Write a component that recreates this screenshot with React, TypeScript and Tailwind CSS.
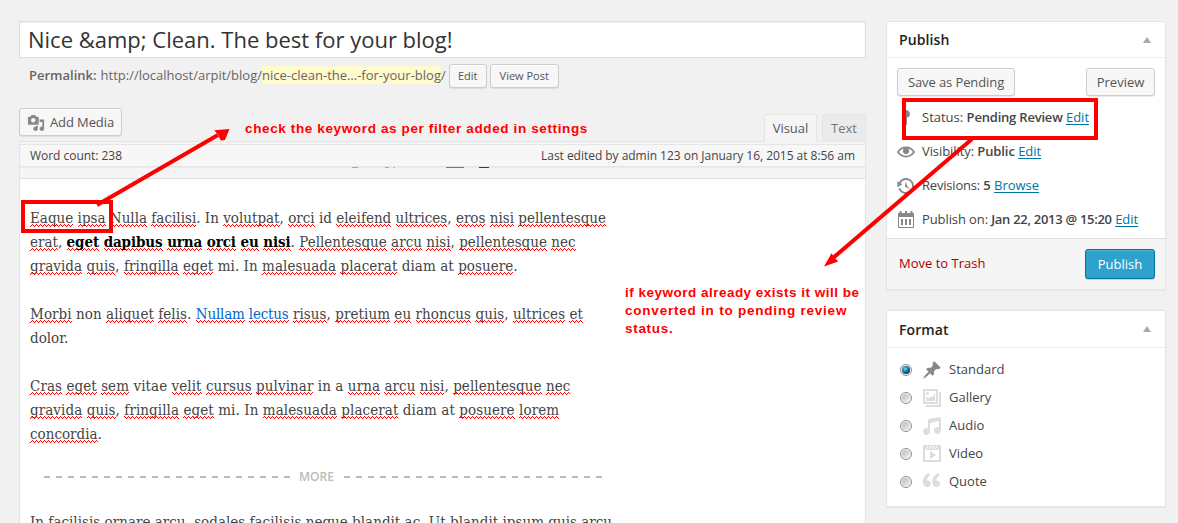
import type { ReactNode } from "react";
import clsx from "clsx";

const KNOWN_WORDS = new Set(["In", "id", "mi", "diam", "at", "non", "dolor", "vitae", "in", "a", "Ut"]);

// The wave is tiled on the 24px line grid and fixed to the viewport, so it stays on whole pixels in every word.
const SQUIGGLE =
  "bg-[url('data:image/svg+xml,%3Csvg%20xmlns=%22http://www.w3.org/2000/svg%22%20width=%224%22%20height=%2224%22%3E%3Cpath%20d=%22M0%208h1v1h-1zM1%209h1v1h-1zM2%2010h1v1h-1zM3%209h1v1h-1z%22%20fill=%22red%22/%3E%3C/svg%3E')] [background-size:4px_24px] bg-fixed bg-repeat";

/** Splits a run of text into words and underlines those that the spell checker does not know. */
function Spell({ children }: { children: string }) {
  return (
    <>
      {children.split(/([A-Za-z]+)/).map((part, i) =>
        /^[A-Za-z]+$/.test(part) && !KNOWN_WORDS.has(part) ? (
          <span key={i} className={SQUIGGLE}>
            {part}
          </span>
        ) : (
          part
        ),
      )}
    </>
  );
}

function Icon({ d, className, viewBox = "0 0 20 20" }: { d: string; className?: string; viewBox?: string }) {
  return (
    <svg viewBox={viewBox} className={clsx("shrink-0", className)} fill="currentColor" fillRule="evenodd">
      <path d={d} />
    </svg>
  );
}

const MEDIA =
  "M13 11V4c0-.55-.45-1-1-1h-1.67L9 1H5L3.67 3H2c-.55 0-1 .45-1 1v7c0 .55.45 1 1 1h10c.55 0 1-.45 1-1zM7 4.5c1.38 0 2.5 1.12 2.5 2.5S8.38 9.5 7 9.5 4.5 8.38 4.5 7 5.62 4.5 7 4.5zM14 6h5v10.5c0 1.38-1.12 2.5-2.5 2.5S14 17.88 14 16.5s1.12-2.5 2.5-2.5c.17 0 .34.02.5.05V9h-3V6zm-4 8.05V13h2v3.5c0 1.38-1.12 2.5-2.5 2.5S7 17.88 7 16.5 8.12 14 9.5 14c.17 0 .34.02.5.05z";
const STATUS = "M14 6c0 1.86-1.28 3.41-3 3.86V16c0 1-2 2-2 2V9.86C7.28 9.41 6 7.86 6 6c0-2.21 1.79-4 4-4s4 1.79 4 4z";
const EYE =
  "M19.7 9.4C17.7 6 14 3.9 10 3.9S2.3 6 .3 9.4L0 10l.3.6c2 3.4 5.7 5.5 9.7 5.5s7.7-2.1 9.7-5.5l.3-.6-.3-.6zM10 14.1c-3.1 0-6-1.6-7.7-4.1C3.6 8 5.7 6.6 8 6.1c-.9.6-1.5 1.7-1.5 2.9 0 1.9 1.6 3.5 3.5 3.5s3.5-1.6 3.5-3.5c0-1.2-.6-2.3-1.5-2.9 2.3.5 4.4 1.9 5.7 3.9-1.7 2.5-4.6 4.1-7.7 4.1z";
const HISTORY =
  "M13.65 2.88c3.93 2.01 5.48 6.84 3.47 10.77s-6.83 5.48-10.77 3.47c-1.87-.96-3.2-2.56-3.86-4.4l1.64-1.03c.45 1.57 1.52 2.95 3.08 3.76 3.01 1.54 6.69.35 8.23-2.66 1.55-3.01.36-6.69-2.65-8.24C9.78 3.01 6.1 4.2 4.56 7.21l1.88.97-4.95 3.08-.39-5.82 1.78.91C4.9 2.4 9.75.89 13.65 2.88zm-4.36 7.83C9.11 10.53 9 10.28 9 10c0-.07.03-.12.04-.19h-.01L10 5l.97 4.81L14 13l-4.5-2.12.02-.02c-.08-.04-.16-.09-.23-.15z";
const CALENDAR =
  "M2 3h1.500V1h2v2h3.500V1h2v2h3.500V1h2v2H18v15H2zM3 7v10h14V7zM5 9h2v6H5zM9 9h2v6H9zM13 9h2v6h-2z";
const PIN =
  "M10.44 3.02l1.82-1.82 6.36 6.35-1.83 1.82c-1.05-.68-2.48-.57-3.41.36l-.75.75c-.92.93-1.04 2.35-.35 3.41l-1.83 1.82-2.41-2.41-2.8 2.79c-.42.42-3.38 2.71-3.8 2.29s1.86-3.39 2.28-3.81l2.79-2.79L4.1 9.36l1.83-1.82c1.05.69 2.48.57 3.4-.36l.75-.75c.93-.92 1.05-2.35.36-3.41z";
const GALLERY =
  "M1 1h15v15H1zM3 3v11h11V3zM4 5.500a1.500 1.500 0 1 1 3 0a1.500 1.500 0 1 1-3 0zM4 13V8l2.500 2.500L9 8l1.500 1.500L13 5v8zM17 4h2v15H4v-2h13z";
const AUDIO =
  "M6.99 3.08l11.02-2c.55-.08.99.45.99 1V14.5c0 1.94-1.57 3.5-3.5 3.5S12 16.44 12 14.5c0-1.93 1.57-3.5 3.5-3.5.54 0 1.04.14 1.5.35V5.08l-9 2V16c-.24 1.7-1.74 3-3.5 3C2.57 19 1 17.44 1 15.5 1 13.57 2.57 12 4.5 12c.54 0 1.04.14 1.5.35V4.08c0-.55.44-.91.99-1z";
const VIDEO =
  "M1 1h18v17H1zM3 6v10h14V6zM8 7l6 4-6 4zM5.500 2L4 5h1l1.500-3zM8.500 2L7 5h1l1.500-3zM11.500 2L10 5h1l1.500-3zM14.500 2L13 5h1l1.500-3z";
const QUOTE =
  "M9.49 13.22c0-.74-.2-1.38-.61-1.9-.62-.78-1.83-.88-2.53-.72-.29-1.65 1.11-3.75 2.92-4.65L7.88 4c-2.73 1.3-5.42 4.28-4.96 8.05C3.21 14.43 4.59 16 6.54 16c.85 0 1.56-.25 2.12-.75s.83-1.18.83-2.03zm8.05 0c0-.74-.2-1.38-.61-1.9-.63-.78-1.83-.88-2.53-.72-.29-1.65 1.11-3.75 2.92-4.65L15.93 4c-2.73 1.3-5.41 4.28-4.95 8.05.29 2.38 1.66 3.95 3.61 3.95.85 0 1.56-.25 2.12-.75s.83-1.18.83-2.03z";

function Button({ className, children }: { className?: string; children: ReactNode }) {
  return (
    <button
      className={clsx(
        "flex items-center justify-center rounded-[3px] border border-[#ccc] bg-[#f7f7f7] text-[#555] shadow-[inset_0_1px_0_#fff,0_1px_0_rgba(0,0,0,0.08)]",
        className,
      )}
    >
      {children}
    </button>
  );
}

function Link({ children }: { children: ReactNode }) {
  return <a className="text-[#0074a2] underline underline-offset-2">{children}</a>;
}

function Panel({
  title,
  className,
  headerClass,
  children,
}: {
  title: string;
  className: string;
  headerClass: string;
  children: ReactNode;
}) {
  return (
    <section className={clsx("flex flex-col border border-[#e5e5e5] bg-white shadow-[0_1px_1px_rgba(0,0,0,0.04)]", className)}>
      <header className={clsx("flex shrink-0 items-center justify-between border-b border-[#eee] pr-3.5 pl-3", headerClass)}>
        <h2 className="text-[14px] font-semibold tracking-[0.1px] text-[#222]">{title}</h2>
        <svg viewBox="0 0 8 6" className="h-1.5 w-2">
          <path d="M4 0L8 6H0z" fill="#aaa" />
        </svg>
      </header>
      {children}
    </section>
  );
}

function InfoRow({ icon, iconClass = "-ml-px mr-1.5 size-5", children }: { icon: string; iconClass?: string; children: ReactNode }) {
  return (
    <div className="flex h-[34px] items-center whitespace-pre">
      <Icon d={icon} className={clsx("text-[#888]", iconClass)} />
      <span>{children}</span>
    </div>
  );
}

function Format({ icon, label, checked, viewBox }: { icon: string; label: string; checked?: boolean; viewBox?: string }) {
  return (
    <label className="flex h-7 items-center">
      <span className="mr-2.5 flex size-3 items-center justify-center rounded-full border border-[#8e8f8f] bg-[#f4f4f4]">
        <span
          className={clsx(
            "size-2 rounded-full",
            checked
              ? "bg-[radial-gradient(circle_at_40%_35%,#7fd8f5_0,#1b86b8_35%,#0b2f4d_75%)]"
              : "bg-[linear-gradient(135deg,#b8bcc0,#f0f0f0)]",
          )}
        />
      </span>
      <Icon d={icon} viewBox={viewBox} className={clsx("size-5", checked ? "text-[#888]" : "text-[#ddd]")} />
      <span className="ml-[7px]">{label}</span>
    </label>
  );
}

export default function App() {
  return (
    <div className="relative flex h-[523px] w-[1178px] items-start gap-5 overflow-hidden bg-[#f1f1f1] pt-[21px] pl-[19px] font-['Open_Sans',sans-serif] text-[13px] text-[#444]">
      <main className="flex h-[502px] w-[847px] shrink-0 flex-col">
        <div className="flex h-[37px] shrink-0 items-center border border-[#ddd] bg-white pl-2 text-[22px] text-[#333] shadow-[inset_0_1px_2px_rgba(0,0,0,0.07)]">
          Nice &amp;amp; Clean. The best for your blog!
        </div>

        <div className="mt-[5px] flex h-[25px] shrink-0 items-center pl-2.5 text-[#666]">
          <strong className="mr-1 font-semibold">Permalink:</strong>
          <span>
            http://localhost/arpit/blog/<span className="bg-[#fffbcc]">nice-clean-the…-for-your-blog</span>/
          </span>
          <Button className="ml-[3px] h-6 w-[38px] pt-px text-[11px]">Edit</Button>
          <Button className="ml-[3px] h-6 w-[69px] pt-px text-[11px]">View Post</Button>
        </div>

        <div className="mt-5 flex h-[33px] shrink-0 items-start justify-between">
          <Button className="h-7 w-[103px] gap-[5px] pt-px">
            <Icon d={MEDIA} className="size-[18px] text-[#888]" />
            <span className="tracking-[-0.1px]">Add Media</span>
          </Button>
          <div className="relative z-10 flex gap-[5px] pt-1.5">
            <span className="flex h-7 w-[53px] items-center justify-center border border-b-0 border-[#e5e5e5] bg-[#f5f5f5] text-[#555]">
              Visual
            </span>
            <span className="flex h-[27px] w-11 items-center justify-center border border-b-0 border-[#e5e5e5] bg-[#ebebeb] pt-px text-[#777]">
              Text
            </span>
          </div>
        </div>

        <div className="flex grow flex-col overflow-hidden border border-b-0 border-[#e5e5e5] bg-white">
          <div className="flex h-[37px] shrink-0 flex-col border-b border-[#dedede] bg-[#f5f5f5] pt-0.5">
            <div className="flex h-[23px] shrink-0 items-center justify-between border-y border-[#e5e5e5] bg-[#f7f7f7] px-2.5 text-[12px] tracking-[-0.03px]">
              <span>Word count: 238</span>
              <span>Last edited by admin 123 on January 16, 2015 at 8:56 am</span>
            </div>
            <div className="flex h-px shrink-0 bg-[#ececec] pl-[332px]">
              <span className="w-1.5 bg-[#aaa]" />
              <span className="ml-[27px] w-1 bg-[#aaa]" />
              <span className="ml-1 w-0.5 bg-[#bbb]" />
              <span className="ml-[51px] w-[18px] bg-[#777]" />
              <span className="ml-[15px] w-2.5 bg-[#333c4a]" />
            </div>
          </div>

          <article className="flex w-[600px] shrink-0 flex-col gap-6 pt-[27px] pl-2.5 font-['DejaVu_Serif_Condensed','DejaVu_Serif',serif] text-[15px] leading-6 whitespace-pre text-[#444]">
            <p>
              <span className="block tracking-[0.012px]">
                <Spell>Eaque ipsa Nulla facilisi. In volutpat, orci id eleifend ultrices, eros nisi pellentesque</Spell>
              </span>
              <span className="block tracking-[0.02px]">
                <Spell>{"erat, "}</Spell>
                <strong className="font-bold tracking-[-0.1px] text-black">
                  <Spell>eget dapibus urna orci eu nisi</Spell>
                </strong>
                <Spell>. Pellentesque arcu nisi, pellentesque nec</Spell>
              </span>
              <span className="block tracking-[0.06px]">
                <Spell>gravida quis, fringilla eget mi. In malesuada placerat diam at posuere.</Spell>
              </span>
            </p>
            <p>
              <span className="block tracking-[0.06px]">
                <Spell>{"Morbi non aliquet felis. "}</Spell>
                <a className="tracking-[-0.18px] text-[#06c]">
                  <Spell>Nullam lectus</Spell>
                </a>
                <Spell>{" risus, pretium eu rhoncus quis, ultrices et"}</Spell>
              </span>
              <span className="block">dolor.</span>
            </p>
            <p>
              <span className="block tracking-[0.075px]">
                <Spell>Cras eget sem vitae velit cursus pulvinar in a urna arcu nisi, pellentesque nec</Spell>
              </span>
              <span className="block tracking-[0.08px]">
                <Spell>gravida quis, fringilla eget mi. In malesuada placerat diam at posuere lorem</Spell>
              </span>
              <span className="block">
                <Spell>concordia.</Spell>
              </span>
            </p>
            <div className="-mt-[3px] -mb-px flex h-5 items-center gap-2 pl-3.5 font-['Open_Sans',sans-serif] text-[12px] font-semibold text-[#bbb]">
              <span className="h-0.5 w-[247px] bg-[repeating-linear-gradient(90deg,#bbb_0_6px,transparent_6px_12px)]" />
              <span className="w-[37px] -translate-x-px text-center">MORE</span>
              <span className="h-0.5 w-[258px] bg-[repeating-linear-gradient(90deg,#bbb_0_6px,transparent_6px_12px)]" />
            </div>
            <p className="tracking-[0.02px]">
              In facilisis ornare arcu, sodales facilisis neque blandit ac. Ut blandit ipsum quis arcu
            </p>
          </article>
        </div>
      </main>

      <aside className="flex w-[280px] shrink-0 flex-col gap-5">
        <Panel title="Publish" className="h-[269px]" headerClass="h-9">
          <div className="flex shrink-0 justify-between px-2.5 pt-2.5">
            <Button className="h-7 w-[118px] pt-px tracking-[-0.1px]">Save as Pending</Button>
            <Button className="h-7 w-[69px] pt-px">Preview</Button>
          </div>
          <div className="mt-[5px] flex shrink-0 flex-col px-2.5">
            <InfoRow icon={STATUS}>
              Status: <b className="font-semibold tracking-[-0.2px]">Pending Review</b> <Link>Edit</Link>
            </InfoRow>
            <InfoRow icon={EYE} iconClass="mr-[7px] size-[18px]">
              <span className="tracking-[-0.08px]">Visibility: </span>
              <b className="font-semibold tracking-[-0.1px]">Public</b> <Link>Edit</Link>
            </InfoRow>
            <InfoRow icon={HISTORY}>
              <span className="tracking-[-0.2px]">Revisions: </span>
              <b className="font-semibold">5</b> <Link>Browse</Link>
            </InfoRow>
            <InfoRow icon={CALENDAR}>
              <span className="tracking-[-0.1px]">Publish on: </span>
              <b className="font-semibold tracking-[-0.29px]">Jan 22, 2013 @ 15:20</b> <Link>Edit</Link>
            </InfoRow>
          </div>
          <footer className="mt-auto flex h-[51px] items-center justify-between border-t border-[#ddd] bg-[#f5f5f5] pr-2.5 pl-3">
            <a className="text-[#a00]">Move to Trash</a>
            <button className="h-[30px] w-[70px] rounded-[3px] border border-[#0074a2] bg-[#2ea2cc] pt-px text-white shadow-[inset_0_1px_0_rgba(120,200,230,0.5),0_1px_0_rgba(0,0,0,0.15)]">
              Publish
            </button>
          </footer>
        </Panel>

        <Panel title="Format" className="h-[197px]" headerClass="h-[37px]">
          <div className="flex flex-col pt-2 pl-[13px]">
            <Format icon={PIN} label="Standard" checked />
            <Format icon={GALLERY} label="Gallery" />
            <Format icon={AUDIO} label="Audio" />
            <Format icon={VIDEO} label="Video" />
            <Format icon={QUOTE} label="Quote" viewBox="2.1 3.1 17.1 17.1" />
          </div>
        </Panel>
      </aside>

      <div className="absolute top-[98px] left-[902px] z-20 h-[42px] w-[196px] border-4 border-[#f00]" />
      <div className="absolute top-[200px] left-[21px] z-20 h-[33px] w-[92px] border-4 border-[#f00]" />
      <svg viewBox="0 0 1178 523" className="pointer-events-none absolute inset-0 z-20 h-[523px] w-[1178px]" fill="#f00">
        <path d="M97 205L218 135M972 139L833 258" stroke="#f00" strokeWidth="4" />
        <path d="M229.500 129L214.300 130.300L218.300 135L220.700 140.500L225 140ZM824 266.500L831.500 253.300L834.500 257.500L838.200 261.500Z" />
      </svg>
      <p className="absolute top-[120px] left-[245px] z-20 font-['Liberation_Sans',sans-serif] text-[13.5px] leading-[18px] font-bold tracking-[0.63px] whitespace-pre text-[#f00]">
        check the keyword as per filter added in settings
      </p>
      <p className="absolute top-[284px] left-[625px] z-20 font-['Liberation_Sans',sans-serif] text-[13.5px] leading-[18px] font-bold tracking-[0.49px] whitespace-pre text-[#f00]">
        if keyword already exists it will be
        <span className="block tracking-[0.78px]">converted in to pending review</span>
        <span className="block tracking-[0.7px]">status.</span>
      </p>
    </div>
  );
}
